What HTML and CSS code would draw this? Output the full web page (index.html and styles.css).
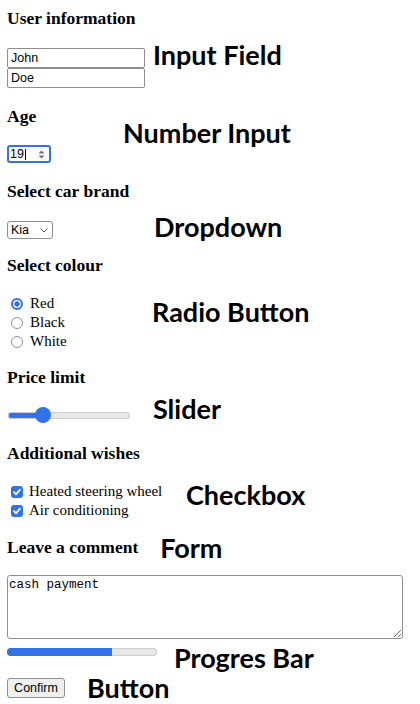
FILE: index.html
```html
<!DOCTYPE html>
<html lang="en">
<head>
<meta charset="utf-8">
<title>Form controls</title>
<link rel="stylesheet" href="styles.css">
</head>
<body>
<main class="form">
  <section class="group">
    <h2 class="title">User information</h2>
    <div class="row row-user">
      <div class="stack">
        <input class="text" type="text" value="John" aria-label="First name">
        <input class="text" type="text" value="Doe" aria-label="Last name">
      </div>
      <span class="note note-input">Input Field</span>
    </div>
  </section>

  <section class="group group-age">
    <h2 class="title">Age</h2>
    <div class="row row-age">
      <div class="number" role="spinbutton" aria-valuenow="19" aria-label="Age">
        <span class="num-val">19</span><span class="caret"></span>
        <svg class="spin" width="7" height="9" viewBox="0 0 7 9" aria-hidden="true">
          <path d="M3.5 0.5 L6.5 3.5 L0.5 3.5 Z" fill="#6e6e6e"/>
          <path d="M0.5 5.5 L6.5 5.5 L3.5 8.5 Z" fill="#6e6e6e"/>
        </svg>
      </div>
      <span class="note note-number">Number Input</span>
    </div>
  </section>

  <section class="group group-car">
    <h2 class="title">Select car brand</h2>
    <div class="row row-car">
      <div class="select" role="combobox" aria-label="Car brand">
        <span class="select-val">Kia</span>
        <svg class="chev" width="8" height="5" viewBox="0 0 8 5" aria-hidden="true">
          <polyline points="0.5,0.5 4,4 7.5,0.5" fill="none" stroke="#555" stroke-width="1"/>
        </svg>
      </div>
      <span class="note note-drop">Dropdown</span>
    </div>
  </section>

  <section class="group group-colour">
    <h2 class="title">Select colour</h2>
    <div class="row row-colour">
      <div class="choices">
        <label class="choice"><input class="radio" type="radio" name="colour" checked>Red</label>
        <label class="choice"><input class="radio" type="radio" name="colour">Black</label>
        <label class="choice"><input class="radio" type="radio" name="colour">White</label>
      </div>
      <span class="note note-radio">Radio Button</span>
    </div>
  </section>

  <section class="group group-price">
    <h2 class="title">Price limit</h2>
    <div class="row row-price">
      <input class="range" type="range" min="0" max="100" value="25" aria-label="Price limit">
      <span class="note note-slider">Slider</span>
    </div>
  </section>

  <section class="group group-wishes">
    <h2 class="title">Additional wishes</h2>
    <div class="row row-wishes">
      <div class="checks">
        <label class="check"><span class="cb" role="checkbox" aria-checked="true"><svg width="12" height="12" viewBox="0 0 12 12" aria-hidden="true"><polyline points="3,6.2 5,8.3 9,3.6" fill="none" stroke="#fff" stroke-width="1.8" stroke-linecap="round" stroke-linejoin="round"/></svg></span>Heated steering wheel</label>
        <label class="check"><span class="cb" role="checkbox" aria-checked="true"><svg width="12" height="12" viewBox="0 0 12 12" aria-hidden="true"><polyline points="3,6.2 5,8.3 9,3.6" fill="none" stroke="#fff" stroke-width="1.8" stroke-linecap="round" stroke-linejoin="round"/></svg></span>Air conditioning</label>
      </div>
      <span class="note note-check">Checkbox</span>
    </div>
  </section>

  <section class="group group-comment">
    <div class="row row-comment">
      <h2 class="title">Leave a comment</h2>
      <span class="note note-form">Form</span>
    </div>
    <textarea class="comment" aria-label="Comment">cash payment</textarea>
    <div class="row row-progress">
      <div class="progress" role="progressbar" aria-valuenow="70" aria-valuemin="0" aria-valuemax="100">
        <div class="progress-fill" style="width:70%"></div>
      </div>
      <span class="note note-progress">Progres Bar</span>
    </div>
    <div class="row row-button">
      <button class="btn" type="button">Confirm</button>
      <span class="note note-button">Button</span>
    </div>
  </section>
</main>
</body>
</html>
```

FILE: styles.css
```css
* { box-sizing: border-box; }

html, body { background: #fff; }

body {
  margin: 0;
  color: #000;
  font-family: "Liberation Serif", "Times New Roman", serif;
}

.form {
  display: flex;
  flex-direction: column;
  padding: 8px 7px 0;
}

.group {
  display: flex;
  flex-direction: column;
}

.title {
  margin: 0;
  font: bold 17.5px/20px "Liberation Serif", "Times New Roman", serif;
  white-space: nowrap;
}

.row {
  display: flex;
  align-items: flex-start;
}

/* annotation labels: a 20px line box that never makes its row taller */
.note {
  font: 700 27px/20px Lato, "Open Sans", sans-serif;
  height: 20px;
  margin-bottom: -20px;
  white-space: nowrap;
  color: #000;
}

/* user information */
.row-user { margin-top: 20px; }
.stack { display: flex; flex-direction: column; }
.text {
  display: block;
  width: 138px;
  height: 20px;
  margin: 0;
  padding: 0 3px;
  border: 1px solid #8e8e8e;
  border-radius: 2px;
  font: 12.5px "Liberation Sans", Arial, sans-serif;
  color: #000;
  background: #fff;
}
.note-input { margin-top: -3px; margin-left: 8px; }

/* age */
.group-age { margin-top: 18px; }
.row-age { margin-top: 19px; }
.number {
  display: flex;
  align-items: center;
  width: 44px;
  height: 18px;
  padding-left: 1px;
  border: 2px solid #3173e6;
  border-radius: 3px;
  font: 12.5px "Liberation Sans", Arial, sans-serif;
}
.caret {
  width: 1px;
  height: 11px;
  margin-left: 1px;
  background: #000;
}
.spin { margin-left: auto; margin-right: 4px; }
.note-number { margin-top: -22px; margin-left: 72px; }

/* car */
.group-car { margin-top: 18px; }
.row-car { margin-top: 20px; }
.select {
  display: flex;
  align-items: center;
  width: 46px;
  height: 18px;
  padding: 0 4px 0 3px;
  border: 1px solid #8e8e8e;
  border-radius: 3px;
  font: 12.5px "Liberation Sans", Arial, sans-serif;
  background: #fff;
}
.chev { margin-left: auto; }
.note-drop { margin-top: -4px; margin-left: 101px; }

/* colour */
.group-colour { margin-top: 16px; }
.row-colour { margin-top: 19px; }
.choices { display: flex; flex-direction: column; width: 145px; }
.choice {
  display: flex;
  align-items: center;
  height: 19px;
  padding-left: 4px;
  font: 15px "Liberation Serif", "Times New Roman", serif;
}
.radio {
  -webkit-appearance: none;
  appearance: none;
  width: 12px;
  height: 12px;
  margin: 0 7px 0 0;
  border: 1px solid #8f8f8f;
  border-radius: 50%;
  background: #fff;
}
.radio:checked {
  border: 2px solid #3173e6;
  background: radial-gradient(circle, #3173e6 0 2.4px, #fff 3px);
}
.note-radio { margin-top: 8px; }

/* price */
.group-price { margin-top: 16px; }
.row-price { margin-top: 20px; align-items: center; height: 16px; }
.range {
  -webkit-appearance: none;
  appearance: none;
  width: 122px;
  height: 16px;
  margin: 0 0 0 1px;
  background: transparent;
}
.range::-webkit-slider-runnable-track {
  height: 7px;
  border-radius: 4px;
  background: linear-gradient(to right, #3173e6 0 35px, #e8e8e8 35px);
  box-shadow: inset 0 0 0 1px #cdcdcd;
}
.range::-webkit-slider-thumb {
  -webkit-appearance: none;
  width: 16px;
  height: 16px;
  margin-top: -4.5px;
  border-radius: 50%;
  background: #3173e6;
  border: none;
}
.note-slider { align-self: flex-start; margin-top: -8px; margin-left: 23px; }

/* wishes */
.group-wishes { margin-top: 20px; }
.row-wishes { margin-top: 19px; }
.checks { display: flex; flex-direction: column; width: 179px; }
.check {
  display: flex;
  align-items: center;
  height: 19px;
  padding-left: 4px;
  font: 15px "Liberation Serif", "Times New Roman", serif;
}
.cb {
  display: flex;
  width: 12px;
  height: 12px;
  margin-right: 6px;
  border-radius: 3px;
  background: #3173e6;
}
.note-check { margin-top: 3px; }

/* comment */
.group-comment { margin-top: 17px; }
.note-form { margin-top: 1px; margin-left: 22px; }
.comment {
  display: block;
  width: 396px;
  height: 64px;
  margin: 18px 0 0;
  padding: 2px 1px;
  border: 1px solid #8e8e8e;
  border-radius: 3px;
  font: 12.5px "Liberation Mono", "Courier New", monospace;
  color: #000;
  background: #fff;
}
.row-progress { margin-top: 9px; }
.progress {
  width: 150px;
  height: 8px;
  border-radius: 4px;
  background: #e8e8e8;
  box-shadow: inset 0 0 0 1px #cfcfcf;
  overflow: hidden;
}
.progress-fill {
  height: 100%;
  background: #3173e6;
}
.note-progress { margin-top: 0; margin-left: 17px; }

.row-button { margin-top: 22px; }
.btn {
  width: 58px;
  height: 20px;
  margin: 0;
  padding: 0;
  border: 1px solid #8f8f8f;
  border-radius: 3px;
  background: #efefef;
  font: 12.5px "Liberation Sans", Arial, sans-serif;
  color: #000;
}
.note-button { margin-top: 0; margin-left: 22px; }
```
